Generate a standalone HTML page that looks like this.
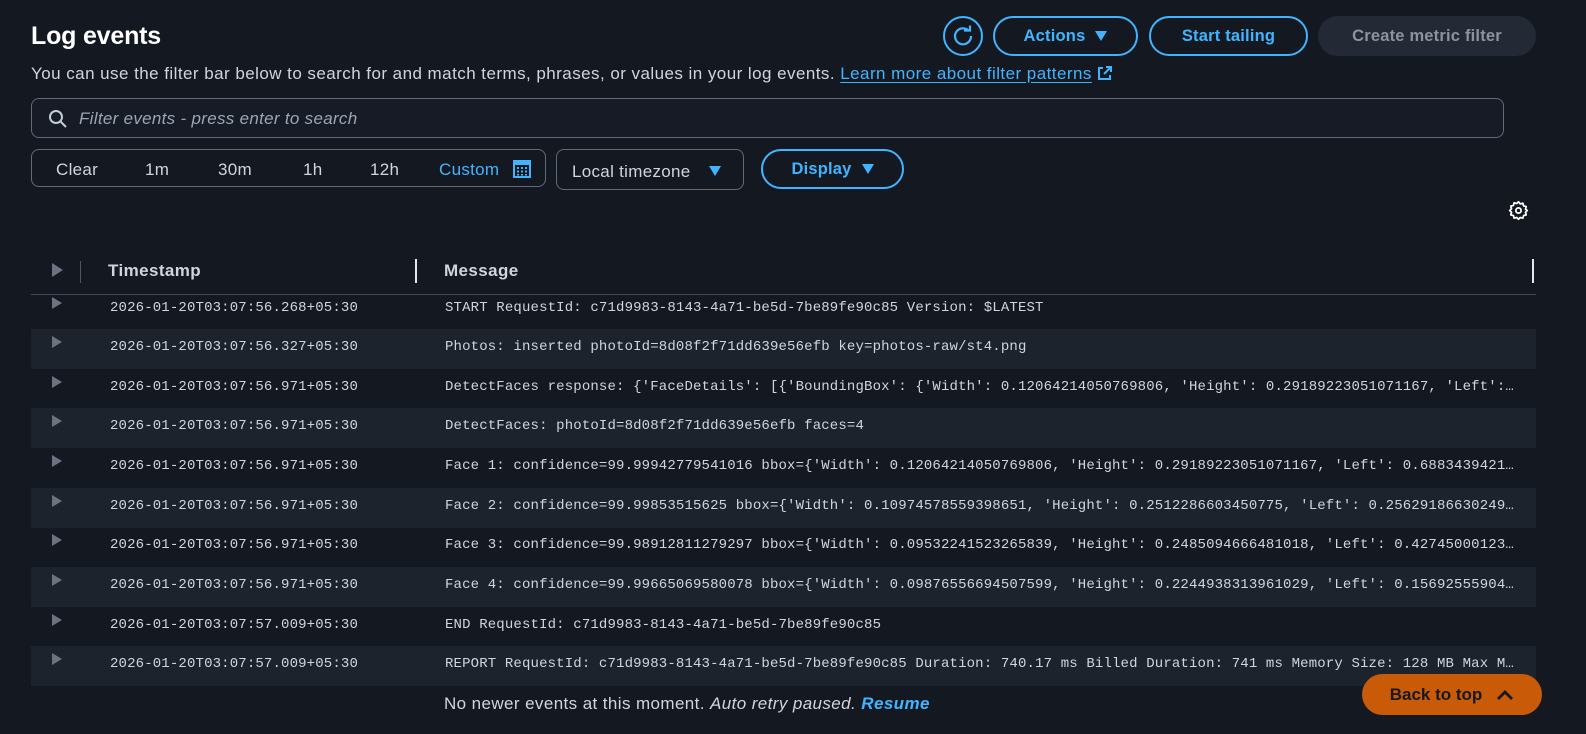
<!DOCTYPE html>
<html><head><meta charset="utf-8"><style>
*{box-sizing:border-box;margin:0;padding:0}
body{width:1586px;height:734px;background:#141921;color:#d1d5db;font-family:"Liberation Sans",sans-serif;position:relative;overflow:hidden}
.abs{position:absolute}
h1{position:absolute;left:31px;top:22px;font-size:25px;font-weight:bold;color:#fff;letter-spacing:-0.2px}
.desc{left:31px;top:64px;font-size:17px;letter-spacing:0.45px;color:#d1d5db;white-space:nowrap}
.desc a{color:#42b4ff;text-decoration:underline;text-underline-offset:3px}
.btn{position:absolute;height:39px;border:2px solid #42b4ff;border-radius:20px;color:#42b4ff;font-weight:bold;font-size:16.5px;letter-spacing:0.2px;display:flex;align-items:center;justify-content:center;gap:10px}
.tri{width:0;height:0;border-left:6px solid transparent;border-right:6px solid transparent;border-top:10px solid #42b4ff}
.search{left:31px;top:98px;width:1473px;height:40px;border:1px solid #5f6b7a;border-radius:8px;background:#161b25}
.search span{position:absolute;left:47px;top:10px;font-style:italic;font-size:17px;letter-spacing:0.3px;color:#9ba7b6}
.seg{left:31px;top:149px;width:515px;height:38px;border:1px solid #5f6b7a;border-radius:8px;font-size:17px;letter-spacing:0.3px;color:#d1d5db}
.seg span{position:absolute;top:10px}
.tz{left:556px;top:149px;width:188px;height:41px;border:1px solid #5f6b7a;border-radius:8px;font-size:17px;letter-spacing:0.3px}
.row{position:absolute;left:31px;width:1505px;height:40px;font-family:"Liberation Mono",monospace;font-size:14px;letter-spacing:0.15px;color:#d1d5db;white-space:nowrap}
.row.alt{background:#1d232d}
.row .ts{position:absolute;left:79px;top:10px}
.row .msg{position:absolute;left:414px;top:10px}
.row .ar{position:absolute;left:21px;top:7px;width:0;height:0;border-top:6px solid transparent;border-bottom:6px solid transparent;border-left:10px solid #6b7380}
.hd{position:absolute;top:261px;font-weight:bold;font-size:17px;letter-spacing:0.4px;color:#d1d5db}
</style></head><body>
<h1>Log events</h1>
<div class="abs desc">You can use the filter bar below to search for and match terms, phrases, or values in your log events. <a>Learn more about filter patterns</a> <svg width="16" height="16" viewBox="0 0 16 16" style="vertical-align:-2px"><path d="M9 2h5v5M14 2L7 9M6 3H2v11h11v-4" fill="none" stroke="#42b4ff" stroke-width="2"/></svg></div>

<div class="btn" style="left:943px;top:16px;width:40px;height:40px;border-radius:50%"><svg width="22" height="22" viewBox="0 0 22 22"><path d="M17 6A8 8 0 1 0 19 11" fill="none" stroke="#42b4ff" stroke-width="2.2"/><path d="M12 5.5h6v-5" fill="none" stroke="#42b4ff" stroke-width="2.2"/></svg></div>
<div class="btn" style="left:993px;top:16px;width:145px;height:40px">Actions <div class="tri"></div></div>
<div class="btn" style="left:1149px;top:16px;width:159px;height:40px">Start tailing</div>
<div class="btn" style="left:1318px;top:16px;width:218px;height:40px;border:none;background:#232a35;color:#8a939f">Create metric filter</div>

<div class="abs search"><svg class="abs" style="left:16px;top:10px" width="20" height="20" viewBox="0 0 20 20"><circle cx="8" cy="8" r="6" fill="none" stroke="#c4ccd6" stroke-width="2"/><path d="M12.5 12.5L18 18" stroke="#c4ccd6" stroke-width="2"/></svg><span>Filter events - press enter to search</span></div>

<div class="abs seg"><span style="left:24px">Clear</span><span style="left:113px">1m</span><span style="left:186px">30m</span><span style="left:271px">1h</span><span style="left:338px">12h</span><span style="left:407px;color:#42b4ff">Custom</span>
<svg class="abs" style="left:481px;top:10px" width="18" height="18" viewBox="0 0 18 18"><rect x="1" y="1" width="16" height="16" fill="none" stroke="#42b4ff" stroke-width="2"/><rect x="1" y="1" width="16" height="4" fill="#42b4ff"/><g fill="#42b4ff"><rect x="4" y="7" width="2" height="2"/><rect x="8" y="7" width="2" height="2"/><rect x="12" y="7" width="2" height="2"/><rect x="4" y="10.5" width="2" height="2"/><rect x="8" y="10.5" width="2" height="2"/><rect x="12" y="10.5" width="2" height="2"/><rect x="4" y="14" width="2" height="1.5"/><rect x="8" y="14" width="2" height="1.5"/><rect x="12" y="14" width="2" height="1.5"/></g></svg></div>
<div class="abs tz"><span class="abs" style="left:15px;top:12px">Local timezone</span><div class="tri abs" style="left:152px;top:16px"></div></div>
<div class="btn" style="left:761px;top:149px;width:143px;height:40px">Display <div class="tri"></div></div>

<svg class="abs" style="left:1508px;top:200px" width="21" height="21" viewBox="0 0 24 24"><path d="M12 2l2 2.5 3-.8.8 3 3 .8-.8 3L22 12l-2 2 .8 3-3 .8-.8 3-3-.8L12 22l-2-2-3 .8-.8-3-3-.8.8-3L2 12l2-2-.8-3 3-.8.8-3 3 .8z" fill="none" stroke="#fff" stroke-width="2" stroke-linejoin="round"/><circle cx="12" cy="12" r="3" fill="none" stroke="#fff" stroke-width="2"/></svg>

<div class="abs" style="left:52px;top:263px;width:0;height:0;border-top:7px solid transparent;border-bottom:7px solid transparent;border-left:11px solid #6b7380"></div>
<div class="abs" style="left:80px;top:261px;width:1px;height:22px;background:#4b5563"></div>
<div class="hd" style="left:108px">Timestamp</div>
<div class="abs" style="left:415px;top:259px;width:2px;height:24px;background:#e5e7eb"></div>
<div class="hd" style="left:444px">Message</div>
<div class="abs" style="left:1532px;top:259px;width:2px;height:24px;background:#e5e7eb"></div>
<div class="abs" style="left:31px;top:294px;width:1505px;height:1px;background:#414852"></div>

<div class="row" style="top:290px"><div class="ar"></div><span class="ts">2026-01-20T03:07:56.268+05:30</span><span class="msg">START RequestId: c71d9983-8143-4a71-be5d-7be89fe90c85 Version: $LATEST</span></div>
<div class="row alt" style="top:329px"><div class="ar"></div><span class="ts">2026-01-20T03:07:56.327+05:30</span><span class="msg">Photos: inserted photoId=8d08f2f71dd639e56efb key=photos-raw/st4.png</span></div>
<div class="row" style="top:369px"><div class="ar"></div><span class="ts">2026-01-20T03:07:56.971+05:30</span><span class="msg">DetectFaces response: {'FaceDetails': [{'BoundingBox': {'Width': 0.12064214050769806, 'Height': 0.29189223051071167, 'Left':…</span></div>
<div class="row alt" style="top:408px"><div class="ar"></div><span class="ts">2026-01-20T03:07:56.971+05:30</span><span class="msg">DetectFaces: photoId=8d08f2f71dd639e56efb faces=4</span></div>
<div class="row" style="top:448px"><div class="ar"></div><span class="ts">2026-01-20T03:07:56.971+05:30</span><span class="msg">Face 1: confidence=99.99942779541016 bbox={'Width': 0.12064214050769806, 'Height': 0.29189223051071167, 'Left': 0.6883439421…</span></div>
<div class="row alt" style="top:488px"><div class="ar"></div><span class="ts">2026-01-20T03:07:56.971+05:30</span><span class="msg">Face 2: confidence=99.99853515625 bbox={'Width': 0.10974578559398651, 'Height': 0.2512286603450775, 'Left': 0.25629186630249…</span></div>
<div class="row" style="top:527px"><div class="ar"></div><span class="ts">2026-01-20T03:07:56.971+05:30</span><span class="msg">Face 3: confidence=99.98912811279297 bbox={'Width': 0.09532241523265839, 'Height': 0.2485094666481018, 'Left': 0.42745000123…</span></div>
<div class="row alt" style="top:567px"><div class="ar"></div><span class="ts">2026-01-20T03:07:56.971+05:30</span><span class="msg">Face 4: confidence=99.99665069580078 bbox={'Width': 0.09876556694507599, 'Height': 0.2244938313961029, 'Left': 0.15692555904…</span></div>
<div class="row" style="top:607px"><div class="ar"></div><span class="ts">2026-01-20T03:07:57.009+05:30</span><span class="msg">END RequestId: c71d9983-8143-4a71-be5d-7be89fe90c85</span></div>
<div class="row alt" style="top:646px"><div class="ar"></div><span class="ts">2026-01-20T03:07:57.009+05:30</span><span class="msg">REPORT RequestId: c71d9983-8143-4a71-be5d-7be89fe90c85 Duration: 740.17 ms Billed Duration: 741 ms Memory Size: 128 MB Max M…</span></div>

<div class="abs" style="left:444px;top:694px;font-size:17px;letter-spacing:0.4px;color:#d1d5db">No newer events at this moment. <i>Auto retry paused.</i> <b style="color:#42b4ff;font-style:italic">Resume</b></div>

<div class="abs" style="left:1362px;top:674px;width:180px;height:41px;border-radius:21px;background:#c95a08;color:#141921;font-weight:bold;font-size:17px;display:flex;align-items:center;justify-content:center;gap:14px">Back to top <svg width="18" height="12" viewBox="0 0 18 12"><path d="M2 10l7-7 7 7" fill="none" stroke="#141921" stroke-width="2.8"/></svg></div>
</body></html>
